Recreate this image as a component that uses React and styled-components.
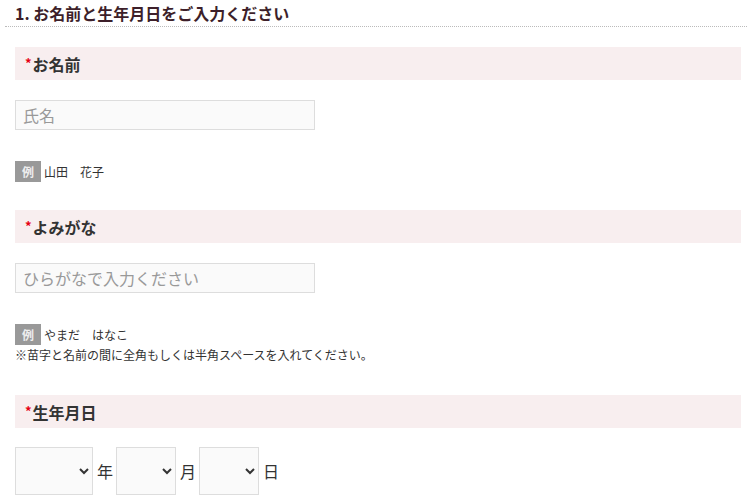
import React from 'react';
import styled, { createGlobalStyle } from 'styled-components';

const GlobalStyle = createGlobalStyle`
  html, body {
    margin: 0;
    padding: 0;
    background: #fff;
  }
  body {
    font-family: "Noto Sans CJK JP", "Noto Sans", sans-serif;
    color: #333;
  }
`;

const Page = styled.div`
  width: 747px;
  overflow: hidden;
`;

const Title = styled.h2`
  margin: 0 0 0 5px;
  padding: 1px 0 1px 10px;
  font-size: 16px;
  line-height: 24px;
  font-weight: 700;
  color: #3d1f2a;
  border-bottom: 1px dotted #bbb;
`;

const Section = styled.div`
  margin: ${(p) => p.$top}px 6px 0 15px;
`;

const Head = styled.div`
  height: 33px;
  display: flex;
  align-items: center;
  padding-left: 10px;
  background: #f8eeef;
  font-size: 16px;
  font-weight: 700;
  color: #333;
`;

const Req = styled.span`
  color: #e60012;
  font-size: 13px;
  align-self: flex-start;
  margin-top: 6px;
  margin-right: 1px;
`;

const TextInput = styled.input`
  display: block;
  box-sizing: border-box;
  width: 300px;
  height: 30px;
  margin-top: 20px;
  padding: 0 7px;
  border: 1px solid #ddd;
  background: #fafafa;
  font-family: inherit;
  font-size: 16px;
  color: #333;
  outline: none;
  &::placeholder {
    color: #999;
  }
`;

const Example = styled.div`
  display: flex;
  align-items: center;
  margin-top: 31px;
  font-size: 12px;
  line-height: 21px;
  color: #333;
`;

const Badge = styled.span`
  width: 26px;
  height: 21px;
  margin-right: 3px;
  display: inline-flex;
  align-items: center;
  justify-content: center;
  background: #999;
  color: #eee;
  font-weight: 700;
  font-size: 12px;
`;

const Note = styled.p`
  margin: 0;
  font-size: 12px;
  line-height: 19px;
  color: #333;
`;

const DateRow = styled.div`
  display: flex;
  align-items: center;
  gap: 4px;
  margin-top: 19px;
  font-size: 16px;
  color: #333;
`;

const Select = styled.select`
  box-sizing: border-box;
  width: ${(p) => p.$w}px;
  height: 48px;
  border: 1px solid #ddd;
  border-radius: 0;
  background: #fafafa;
  font-family: inherit;
  font-size: 16px;
  color: #333;
  outline: none;
`;

const Unit = styled.span`
  margin-right: -1px;
`;

export default function App() {
  return (
    <Page>
      <GlobalStyle />
      <Title>1. お名前と生年月日をご入力ください</Title>

      <Section $top={20}>
        <Head><Req>*</Req>お名前</Head>
        <TextInput placeholder="氏名" />
        <Example><Badge>例</Badge>山田　花子</Example>
      </Section>

      <Section $top={28}>
        <Head><Req>*</Req>よみがな</Head>
        <TextInput placeholder="ひらがなで入力ください" />
        <Example><Badge>例</Badge>やまだ　はなこ</Example>
        <Note>※苗字と名前の間に全角もしくは半角スペースを入れてください。</Note>
      </Section>

      <Section $top={31}>
        <Head><Req>*</Req>生年月日</Head>
        <DateRow>
          <Select $w={78}><option></option></Select>
          <Unit>年</Unit>
          <Select $w={60}><option></option></Select>
          <Unit>月</Unit>
          <Select $w={60}><option></option></Select>
          <Unit>日</Unit>
        </DateRow>
      </Section>
    </Page>
  );
}
